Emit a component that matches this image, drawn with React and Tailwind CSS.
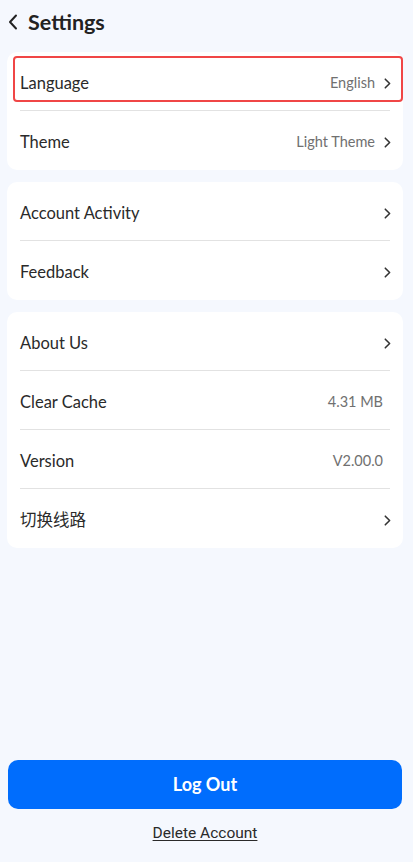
import React from "react";

const Chevron = ({ className = "" }) => (
  <svg width="7" height="11" viewBox="0 0 7 11" className={className} fill="none">
    <path d="M1.3 1.2L5.6 5.5L1.3 9.8" stroke="#333" strokeWidth="1.6" strokeLinecap="round" strokeLinejoin="round" />
  </svg>
);

const Row = ({ label, value, chevron = true, last = false, highlight = false }) => (
  <div className="relative h-[59px] flex items-center pl-[13px] pr-[12px] pt-[3px]">
    {highlight && (
      <div className="absolute left-[6px] right-[0px] top-[4px] bottom-[9px] border-2 border-[#f04646] rounded-[4px]" />
    )}
    <span className="text-[16.5px] text-[#2a2a2a]">{label}</span>
    <div className="ml-auto flex items-center">
      {value && (
        <span className={`text-[14.5px] text-[#707070] ${chevron ? "mr-[9px]" : "mr-[8px]"}`}>{value}</span>
      )}
      {chevron && <Chevron />}
    </div>
    {!last && <div className="absolute left-[13px] right-[13px] bottom-0 h-px bg-[#e2e2e2]" />}
  </div>
);

const Card = ({ children }) => (
  <div className="bg-white rounded-[10px] ml-[7px] mr-[10px] flex flex-col">{children}</div>
);

export default function App() {
  return (
    <div
      className="h-[862px] w-full bg-[#f5f8fe] flex flex-col"
      style={{ fontFamily: "Lato, 'Noto Sans CJK SC', sans-serif" }}
    >
      <div className="h-[44px] flex items-center pl-[8px]">
        <svg width="10" height="16" viewBox="0 0 10 16" fill="none">
          <path d="M8 1.5L2 8L8 14.5" stroke="#222" strokeWidth="2" strokeLinecap="round" strokeLinejoin="round" />
        </svg>
        <span className="ml-[10px] text-[21.5px] font-bold text-[#222]">Settings</span>
      </div>
      <div className="mt-[8px] flex flex-col gap-[12px]">
        <Card>
          <Row label="Language" value="English" highlight />
          <Row label="Theme" value="Light Theme" last />
        </Card>
        <Card>
          <Row label="Account Activity" />
          <Row label="Feedback" last />
        </Card>
        <Card>
          <Row label="About Us" />
          <Row label="Clear Cache" value="4.31 MB" chevron={false} />
          <Row label="Version" value="V2.00.0" chevron={false} />
          <Row label="切换线路" last />
        </Card>
      </div>
      <div className="mt-auto pl-[8px] pr-[11px] pb-[18px] flex flex-col items-center">
        <button className="w-full h-[49px] rounded-[10px] bg-[#006dfd] text-white text-[18px] font-bold">
          Log Out
        </button>
        <span
          className="mt-[13px] text-[15.5px] text-[#2a2a2a] underline underline-offset-2 leading-[22px]"
          style={{ fontFamily: "Roboto, sans-serif" }}
        >
          Delete Account
        </span>
      </div>
    </div>
  );
}
